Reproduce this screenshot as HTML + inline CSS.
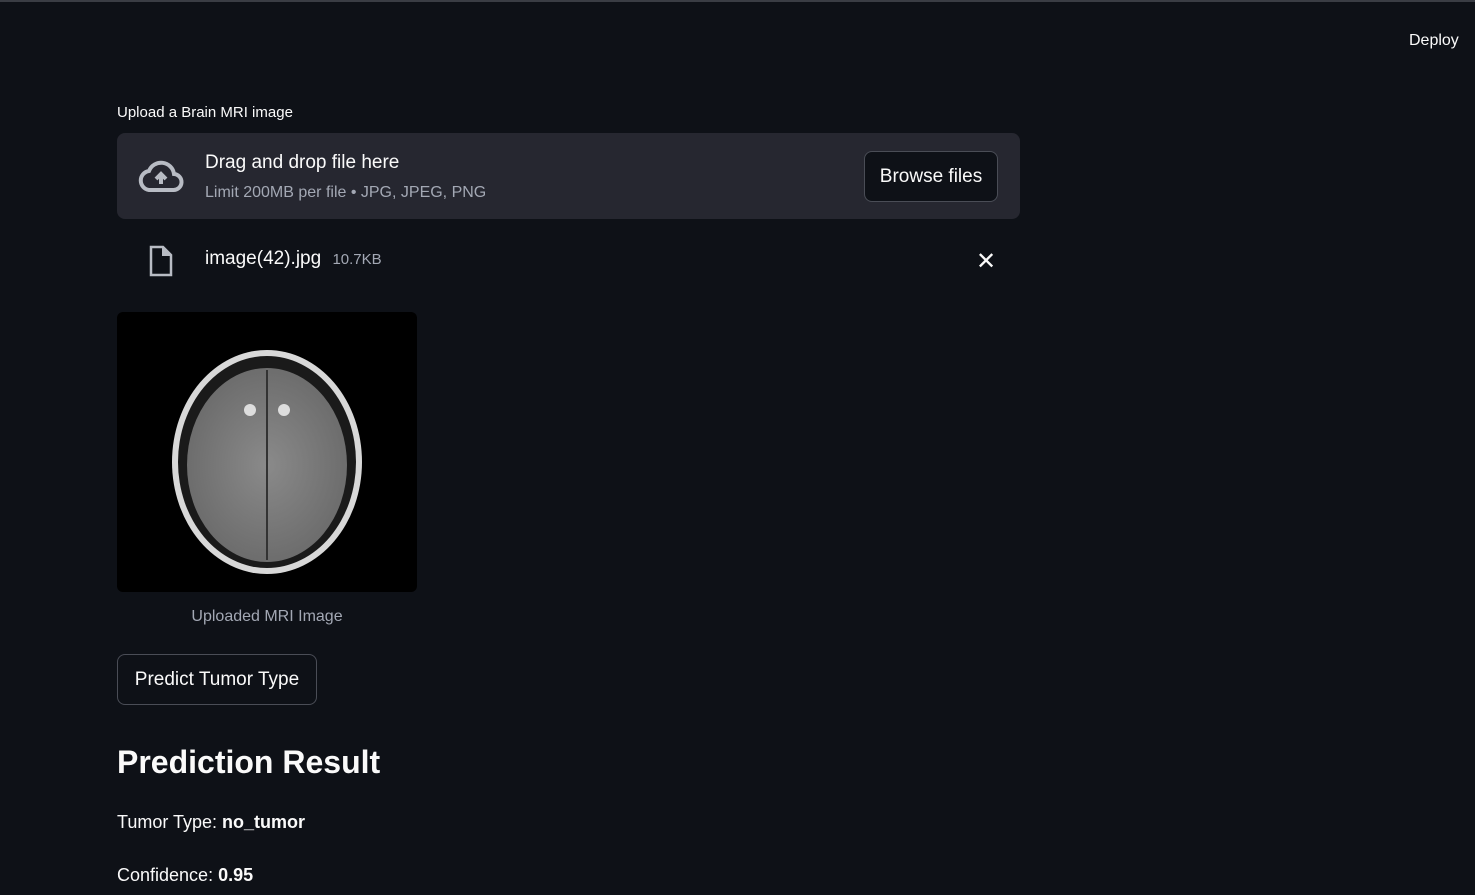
<!DOCTYPE html>
<html><head><style>
body{margin:0;width:1475px;height:895px;background:#0e1117;font-family:"Liberation Sans",sans-serif;color:#fafafa;position:relative;overflow:hidden}
.a{position:absolute}
.topbar{left:0;top:0;width:1475px;height:2px;background:#3a3d44}
</style></head><body>
<div class="a topbar"></div>
<div class="a" style="left:1409px;top:32px;font-size:16px">Deploy</div>
<div class="a" style="left:117px;top:104px;font-size:15px">Upload a Brain MRI image</div>
<div class="a" style="left:117px;top:133px;width:903px;height:86px;background:#262730;border-radius:8px"></div>
<svg class="a" style="left:137px;top:156px" width="48" height="40" viewBox="0 0 24 20"><path d="M6 17h12a4 4 0 0 0 .5-8A6.5 6.5 0 0 0 6 7.5 4.8 4.8 0 0 0 6 17z" fill="none" stroke="#b8bcc4" stroke-width="2"/><path d="M12 14V9M9.5 11.5 12 9l2.5 2.5" stroke="#b8bcc4" stroke-width="2" fill="none"/></svg>
<div class="a" style="left:205px;top:152px;font-size:19px">Drag and drop file here</div>
<div class="a" style="left:205px;top:184px;font-size:16px;color:#a3a8b4">Limit 200MB per file • JPG, JPEG, PNG</div>
<div class="a" style="left:864px;top:151px;width:134px;height:51px;border:1px solid #4a4d56;border-radius:8px;background:#0e1117;box-sizing:border-box;font-size:19px;line-height:49px;text-align:center">Browse files</div>
<svg class="a" style="left:148px;top:245px" width="26" height="32" viewBox="0 0 26 32"><path d="M3 2h12l8 8v20H3z" fill="none" stroke="#b8bcc4" stroke-width="2.5"/><path d="M15 2v8h8" fill="#b8bcc4" stroke="#b8bcc4" stroke-width="2"/></svg>
<div class="a" style="left:205px;top:248px;font-size:19px">image(42).jpg <span style="font-size:15px;color:#a3a8b4;margin-left:6px">10.7KB</span></div>
<div class="a" style="left:976px;top:247px;font-size:24px">✕</div>
<svg class="a" style="left:117px;top:312px" width="300" height="280"><rect width="300" height="280" rx="6" fill="#000"/>
<defs><radialGradient id="g" cx="50%" cy="50%" r="55%"><stop offset="0" stop-color="#8a8a8a"/><stop offset="1" stop-color="#6a6a6a"/></radialGradient></defs>
<ellipse cx="150" cy="150" rx="95" ry="112" fill="#d8d8d8"/>
<ellipse cx="150" cy="150" rx="89" ry="106" fill="#1a1a1a"/>
<ellipse cx="150" cy="153" rx="80" ry="97" fill="url(#g)"/>
<line x1="150" y1="58" x2="150" y2="248" stroke="#333" stroke-width="2"/>
<ellipse cx="133" cy="98" rx="6" ry="6" fill="#ddd"/><ellipse cx="167" cy="98" rx="6" ry="6" fill="#ddd"/>
</svg>
<div class="a" style="left:117px;top:608px;width:300px;text-align:center;font-size:16px;color:#a3a8b4">Uploaded MRI Image</div>
<div class="a" style="left:117px;top:654px;width:200px;height:51px;border:1px solid #4a4d56;border-radius:8px;box-sizing:border-box;font-size:19px;line-height:49px;text-align:center">Predict Tumor Type</div>
<div class="a" style="left:117px;top:744px;font-size:32px;font-weight:bold">Prediction Result</div>
<div class="a" style="left:117px;top:812px;font-size:18px">Tumor Type: <b>no_tumor</b></div>
<div class="a" style="left:117px;top:865px;font-size:18px">Confidence: <b>0.95</b></div>
</body></html>
